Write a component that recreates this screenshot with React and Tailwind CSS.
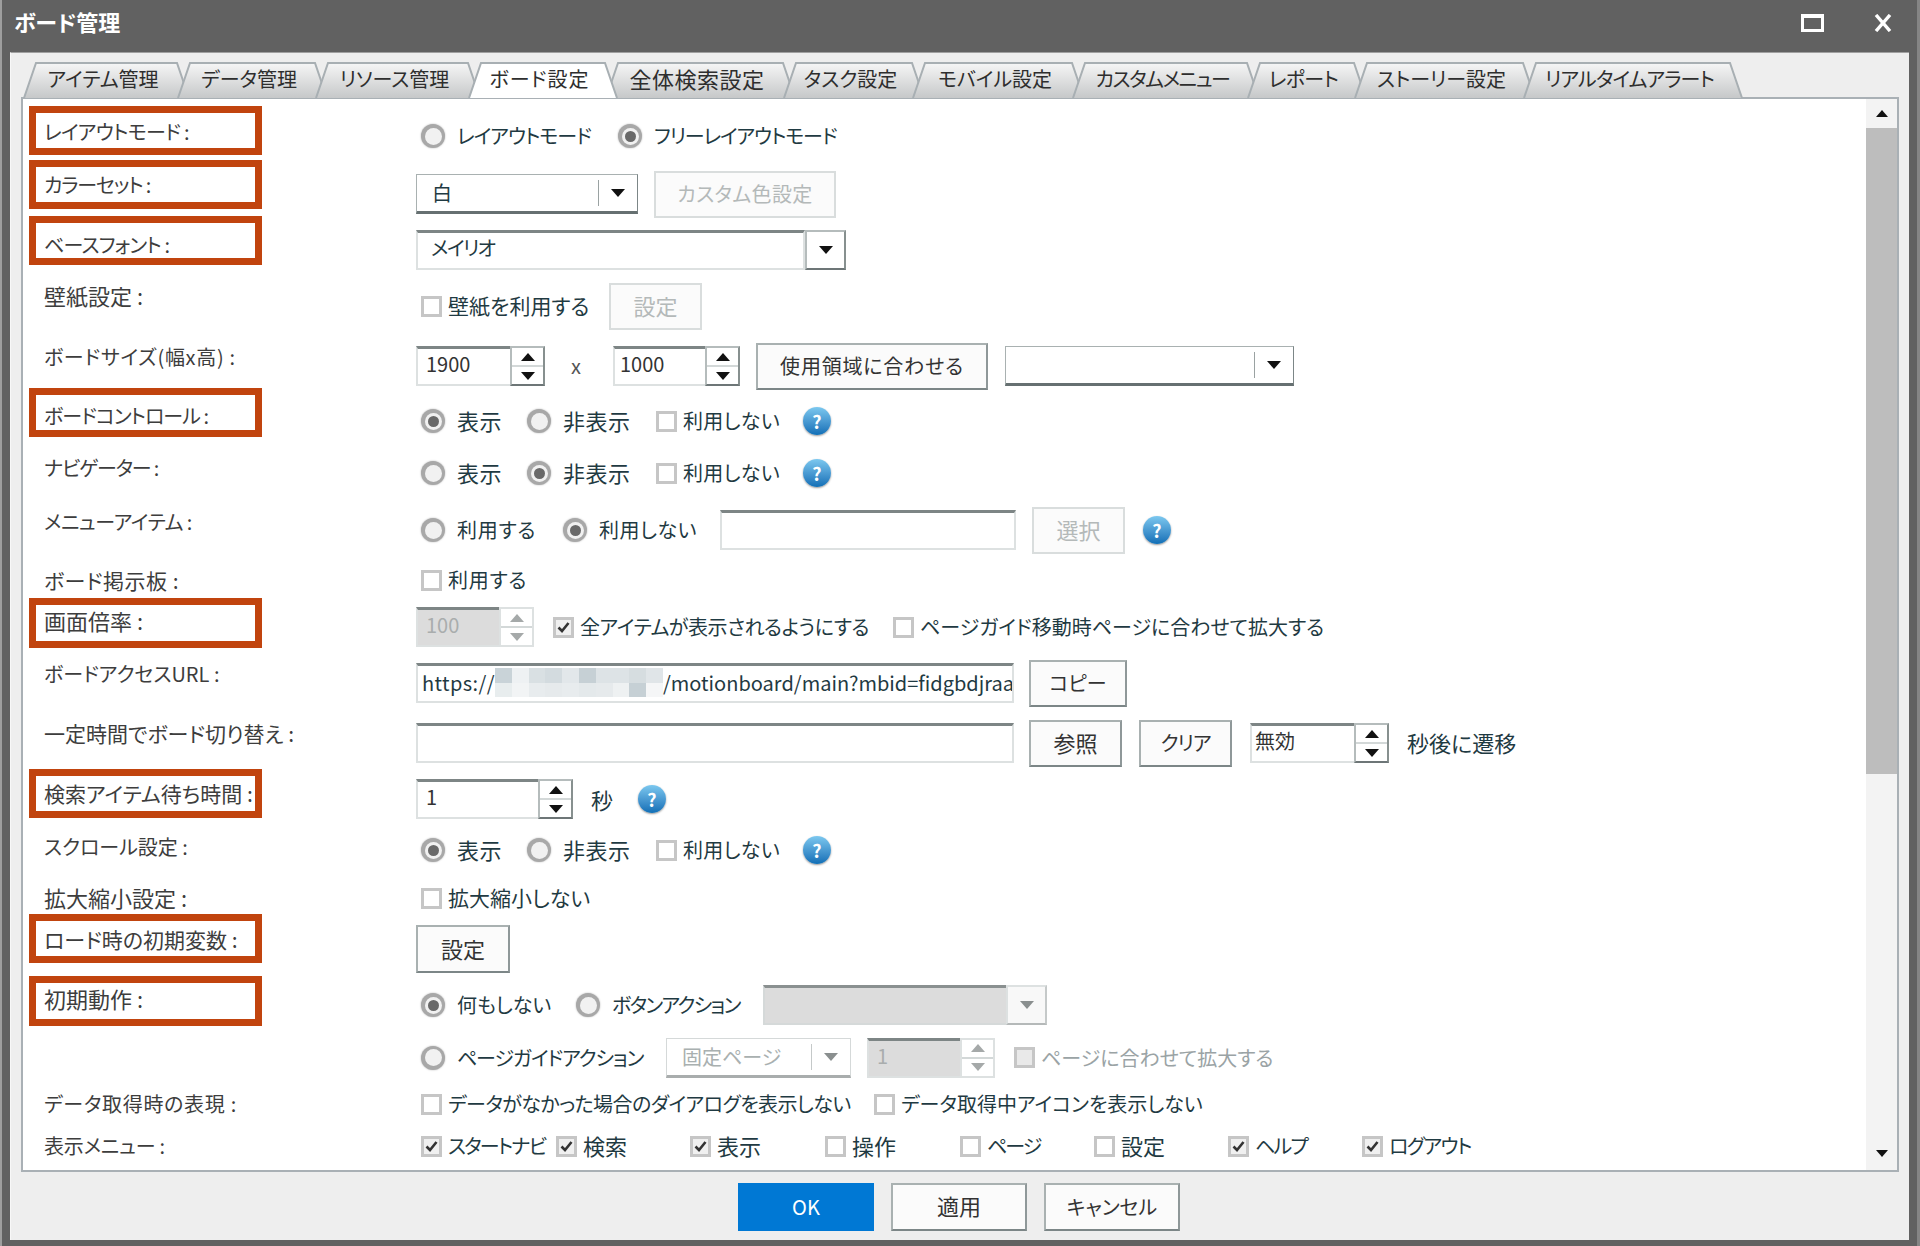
import React from "react";

const Tri = ({ up, color = "#111111", w = 14, h = 8 }) => (
  <svg width={w} height={h} viewBox="0 0 14 8" preserveAspectRatio="none">
    <path d={up ? "M7 0 L14 8 L0 8 Z" : "M0 0 L14 0 L7 8 Z"} fill={color} />
  </svg>
);

const BIG = "text-[22px] -mt-[3px]";
const MID = "text-[21px] -mt-[2px]";

const Radio = ({ on, w, t = "", children }) => (
  <div className={`flex items-center gap-[12px] shrink-0 whitespace-nowrap ${w}`}>
    <div className="w-[24px] h-[24px] rounded-full bg-[#a8a8a8] shadow-[0_0_2px_#b5b5b5] flex items-center justify-center shrink-0">
      <div className="w-[17px] h-[17px] rounded-full bg-[#f1f1f1] flex items-center justify-center">
        {on && <div className="w-[11px] h-[11px] rounded-full bg-[#696969]" />}
      </div>
    </div>
    <span className={t}>{children}</span>
  </div>
);

const Check = ({ on, off, w, t = "", children }) => (
  <div className={`flex items-center gap-[6px] shrink-0 whitespace-nowrap ${w} ${off ? "text-[#9aa3a5]" : ""}`}>
    <div className={`w-[21px] h-[21px] border-[3px] border-[#c6c6c6] flex items-center justify-center shrink-0 ${off ? "bg-[#e9e9e9]" : on ? "bg-[#f0f0f0]" : "bg-white"}`}>
      {on && (
        <svg width="13" height="12" viewBox="0 0 13 12">
          <path d="M1.5 6.5 L5 10 L11.5 2" fill="none" stroke="#333333" strokeWidth="2.6" />
        </svg>
      )}
    </div>
    <span className={t}>{children}</span>
  </div>
);

const Help = ({ cls = "" }) => (
  <div className={`w-[28px] h-[28px] rounded-full bg-linear-to-b from-[#7cc8ef] to-[#0e6fb6] shadow-[0_1px_2px_#999999] text-white font-bold text-[18px] leading-[28px] text-center shrink-0 ${cls}`}>
    ?
  </div>
);

const Btn = ({ w, h = "h-[47px]", dis, cls = "", t = "", children }) => (
  <div
    className={`flex items-center justify-center bg-[#fbfbfb] border-2 shrink-0 whitespace-nowrap ${w} ${h} ${cls} ${
      dis
        ? "border-[#d9dddd] text-[#b4b9b9]"
        : "border-[#a9b1b1] border-b-[#7c8687] border-r-[#8f9899] text-[#333333]"
    }`}
  >
    <span className={t}>{children}</span>
  </div>
);

const Spin = ({ w, val, dis, cls = "", pad = "pl-[8px]" }) => (
  <div className={`flex h-[40px] shrink-0 ${cls}`}>
    <div
      className={`${w} ${pad} border-t-[3px] border-t-[#7d8585] border-l-2 border-b-2 border-[#dde1e1] leading-[30px] text-[#333333] ${
        dis ? "bg-[#dcdcdc] text-[#a9adad]" : "bg-white"
      }`}
    >
      {val}
    </div>
    <div
      className={`w-[35px] flex flex-col border-2 ${
        dis ? "border-[#dde1e1]" : "border-[#b5bcbc] border-b-[#6d7677] border-r-[#87908f]"
      }`}
    >
      <div className="flex-1 flex items-center justify-center border-b-2 border-[#d3d8d8]">
        <Tri up color={dis ? "#a5a9a9" : "#111111"} />
      </div>
      <div className="flex-1 flex items-center justify-center">
        <Tri color={dis ? "#a5a9a9" : "#111111"} />
      </div>
    </div>
  </div>
);

const Drop = ({ w, val, dis, cls = "" }) => (
  <div
    className={`flex items-center h-[40px] shrink-0 border border-b-[3px] bg-white ${w} ${cls} ${
      dis ? "border-[#d5d9d9] border-b-[#a9adad] text-[#a9b0b0] bg-[#f5f5f5]" : "border-[#a9b1b1] border-b-[#667071] border-r-[#7c8687]"
    }`}
  >
    <span className="flex-1 pl-[15px] whitespace-nowrap">{val}</span>
    <div className={`w-[1px] h-[26px] ${dis ? "bg-[#c5c9c9]" : "bg-[#9aa2a2]"}`} />
    <div className="w-[38px] flex justify-center">
      <Tri color={dis ? "#8a8f8f" : "#111111"} />
    </div>
  </div>
);

const Field = ({ w, cls = "", children }) => (
  <div className={`h-[40px] shrink-0 bg-white border-t-[3px] border-t-[#7d8585] border-l-2 border-r-2 border-b-2 border-[#dde1e1] overflow-hidden whitespace-nowrap ${w} ${cls}`}>
    {children}
  </div>
);

const Row = ({ h, label, lift = "", t = "", children }) => (
  <div className={`flex items-center ${h}`}>
    <div className={`w-[393px] pl-[21px] shrink-0 text-[#3d3d3d] whitespace-nowrap ${lift}`}>
      <span className={t}>{label}</span>
    </div>
    <div className="flex items-center">{children}</div>
  </div>
);

const TABS = [
  { t: "アイテム管理", w: 167, c: "w-[167px]" },
  { t: "データ管理", w: 151, c: "w-[151px]" },
  { t: "リソース管理", w: 166, c: "w-[166px]" },
  { t: "ボード設定", w: 150, c: "w-[150px]", s: "tracking-[1px]", on: true },
  { t: "全体検索設定", w: 191, c: "w-[191px]", s: "text-[22px] -mt-[3px] tracking-[0.5px]" },
  { t: "タスク設定", w: 142, c: "w-[142px]" },
  { t: "モバイル設定", w: 173, c: "w-[173px]" },
  { t: "カスタムメニュー", w: 188, c: "w-[188px]", s: "tracking-[-1.4px]" },
  { t: "レポート", w: 120, c: "w-[120px]", s: "tracking-[-0.6px]" },
  { t: "ストーリー設定", w: 182, c: "w-[182px]" },
  { t: "リアルタイムアラート", w: 220, c: "w-[220px]", s: "tracking-[-0.9px]" },
];

const Tab = ({ t, w, c, s = "", on }) => (
  <div className={`relative h-[36px] -ml-[13px] first:ml-0 shrink-0 flex items-center justify-center pr-[7px] text-[#2e2e2e] whitespace-nowrap ${c} ${on ? "z-10" : ""}`}>
    <svg className="absolute inset-0" width={w} height="36" viewBox={`0 0 ${w} 36`}>
      <path
        d={`M1 36 L13 1 L${w - 13} 1 L${w - 1} 36`}
        fill={on ? "#ffffff" : "url(#tabfill)"}
        stroke="#a8afb3"
        strokeWidth="2"
      />
    </svg>
    <span className={`relative pb-[2px] ${s}`}>{t}</span>
  </div>
);

const BOXES = [
  "top-[7px] h-[49px]",
  "top-[61px] h-[49px]",
  "top-[117px] h-[49px]",
  "top-[289px] h-[49px]",
  "top-[499px] h-[50px]",
  "top-[670px] h-[49px]",
  "top-[815px] h-[49px]",
  "top-[877px] h-[50px]",
];

const BLUR = [
  "#c9d3d8", "#eef1f3", "#d9e0e3", "#d3dbdf", "#e2e7ea", "#c6d0d5", "#dde3e6", "#dde3e6", "#d6dde0", "#e0e5e8",
  "#e8edee", "#f2f4f5", "#e8ecee", "#e6eaec", "#e8ecee", "#e4e9eb", "#e6eaec", "#eef1f2", "#c6d0d5", "#f5f6f7",
];

const App = () => {
  return (
    <div className="w-[1920px] h-[1246px] bg-[#616161] border-l-2 border-l-[#9e9e9e] border-r-[3px] border-r-[#858585] flex flex-col overflow-hidden text-[20px] leading-[30px] font-['Noto_Sans_CJK_JP','Liberation_Sans',sans-serif] [font-feature-settings:'palt']">
      {/* title bar */}
      <div className="h-[52px] shrink-0 flex items-center justify-between pl-[12px] pr-[25px]">
        <span className="text-white font-bold text-[22px] pb-[11px]">ボード管理</span>
        <div className="flex items-center gap-[50px] pb-[6px]">
          <div className="w-[23px] h-[18px] border-[3px] border-t-[4px] border-white" />
          <svg width="18" height="18" viewBox="0 0 18 18">
            <path d="M2 1 L16 17 M16 1 L2 17" stroke="white" strokeWidth="3.4" />
          </svg>
        </div>
      </div>

      <div className="ml-[8px] mr-[8px] h-[1188px] bg-[#eeeeee] border-t border-t-[#a0a0a0] border-l border-l-[#f8f8f8] flex flex-col pl-[10px] pr-[10px] pt-[9px]">
        <svg width="0" height="0" className="absolute">
          <defs>
            <linearGradient id="tabfill" x1="0" y1="0" x2="0" y2="1">
              <stop offset="0" stopColor="#f6f6f6" />
              <stop offset="1" stopColor="#c6c8c9" />
            </linearGradient>
          </defs>
        </svg>

        {/* tabs */}
        <div className="flex h-[36px] -mb-[1px] relative z-10 pl-[2px]">
          {TABS.map((tab) => (
            <Tab key={tab.t} {...tab} />
          ))}
        </div>

        {/* panel */}
        <div className="relative h-[1075px] bg-white border-2 border-[#a9b0b5] flex text-[#1f3a42]">
          <div className="flex-1 pt-[9px] overflow-hidden">
            <Row h="h-[56px]" label="レイアウトモード :" lift="pb-[8px]" t="tracking-[-0.7px]">
              <div className="flex ml-[5px]">
                <Radio w="w-[197px]" t="tracking-[-1px]">レイアウトモード</Radio>
                <Radio on t="tracking-[-1.1px]">フリーレイアウトモード</Radio>
              </div>
            </Row>
            <Row h="h-[60px]" label="カラーセット :" lift="pb-[18px]" t="tracking-[-1.2px]">
              <Drop w="w-[222px]" val="白" />
              <Btn w="w-[182px]" dis cls="ml-[16px]" t="tracking-[0.4px]">カスタム色設定</Btn>
            </Row>
            <Row h="h-[52px]" label="ベースフォント :" lift="pb-[10px]" t="tracking-[-0.8px]">
              <Field w="w-[389px]"><span className="pl-[13px] tracking-[-1.6px]">メイリオ</span></Field>
              <div className="w-[41px] h-[40px] flex items-center justify-center border-2 border-[#b5bcbc] border-b-[#6d7677] border-r-[#87908f] bg-white">
                <Tri />
              </div>
            </Row>
            <Row h="h-[60px]" label="壁紙設定 :" lift="pb-[20px]" t="text-[22px]">
              <div className="flex items-center ml-[5px]">
                <Check w="w-[188px]" t={MID}>壁紙を利用する</Check>
                <Btn w="w-[93px]" dis t={BIG}>設定</Btn>
              </div>
            </Row>
            <Row h="h-[60px]" label="ボードサイズ(幅x高) :" lift="pb-[18px]" t="tracking-[0.7px]">
              <Spin w="w-[94px]" val="1900" />
              <span className="w-[68px] pr-[6px] text-center text-[#555555]">x</span>
              <Spin w="w-[92px]" val="1000" pad="pl-[5px]" />
              <Btn w="w-[232px]" cls="ml-[16px]" t="tracking-[0.8px]">使用領域に合わせる</Btn>
              <Drop w="w-[289px]" val="" cls="ml-[17px]" />
            </Row>
            <Row h="h-[50px]" label="ボードコントロール :" lift="pb-[10px]" t="tracking-[-1px]">
              <div className="flex items-center ml-[5px]">
                <Radio on w="w-[106px]" t={`${BIG} tracking-[0.5px]`}>表示</Radio>
                <Radio w="w-[129px]" t={`${BIG} tracking-[0.5px]`}>非表示</Radio>
                <Check w="w-[147px]" t="tracking-[0.3px]">利用しない</Check>
                <Help />
              </div>
            </Row>
            <Row h="h-[54px]" label="ナビゲーター :" lift="pb-[10px]" t="tracking-[-1.2px]">
              <div className="flex items-center ml-[5px]">
                <Radio w="w-[106px]" t={`${BIG} tracking-[0.5px]`}>表示</Radio>
                <Radio on w="w-[129px]" t={`${BIG} tracking-[0.5px]`}>非表示</Radio>
                <Check w="w-[147px]" t="tracking-[0.3px]">利用しない</Check>
                <Help />
              </div>
            </Row>
            <Row h="h-[60px]" label="メニューアイテム :" lift="pb-[16px]" t="tracking-[-0.5px]">
              <div className="flex items-center ml-[5px]">
                <Radio w="w-[142px]" t="tracking-[0.8px]">利用する</Radio>
                <Radio on w="w-[157px]" t="tracking-[0.5px]">利用しない</Radio>
                <Field w="w-[296px]" />
                <Btn w="w-[93px]" dis cls="ml-[16px]" t={BIG}>選択</Btn>
                <Help cls="ml-[18px]" />
              </div>
            </Row>
            <Row h="h-[40px]" label="ボード掲示板 :" t="text-[21px] tracking-[0.5px]">
              <Check w="ml-[5px]" t="tracking-[0.8px]">利用する</Check>
            </Row>
            <Row h="h-[54px]" label="画面倍率 :" lift="pb-[12px]" t="text-[22px]">
              <Spin w="w-[83px]" val="100" dis />
              <Check on w="w-[340px] ml-[19px]" t="tracking-[-0.45px]">全アイテムが表示されるようにする</Check>
              <Check>ページガイド移動時ページに合わせて拡大する</Check>
            </Row>
            <Row h="h-[58px]" label="ボードアクセスURL :" lift="pb-[18px]">
              <Field w="w-[598px]">
                <div className="flex items-center h-full pl-[4px] -mt-[1px]">
                  <span className="tracking-[0.4px]">https://</span>
                  <div className="grid grid-cols-10 w-[168px] h-[29px] shrink-0">
                    {BLUR.map((c, i) => (
                      <div key={i} style={{ backgroundColor: c }} />
                    ))}
                  </div>
                  <span>/motionboard/main?mbid=fidgbdjraav</span>
                </div>
              </Field>
              <Btn w="w-[98px]" cls="ml-[15px]">コピー</Btn>
            </Row>
            <Row h="h-[62px]" label="一定時間でボード切り替え :" lift="pb-[19px]" t="text-[21px]">
              <Field w="w-[598px]" />
              <Btn w="w-[93px]" cls="ml-[15px]" t={BIG}>参照</Btn>
              <Btn w="w-[93px]" cls="ml-[17px]" t="tracking-[-1px]">クリア</Btn>
              <Spin w="w-[104px]" val="無効" cls="ml-[18px]" pad="pl-[3px]" />
              <span className={`ml-[18px] whitespace-nowrap ${BIG}`}>秒後に遷移</span>
            </Row>
            <Row h="h-[50px]" label="検索アイテム待ち時間 :" lift="pb-[12px]" t="text-[21px]">
              <Spin w="w-[122px]" val="1" />
              <span className="ml-[18px] w-[47px] text-[22px]">秒</span>
              <Help />
            </Row>
            <Row h="h-[52px]" label="スクロール設定 :" lift="pb-[6px]">
              <div className="flex items-center ml-[5px]">
                <Radio on w="w-[106px]" t={`${BIG} tracking-[0.5px]`}>表示</Radio>
                <Radio w="w-[129px]" t={`${BIG} tracking-[0.5px]`}>非表示</Radio>
                <Check w="w-[147px]" t="tracking-[0.3px]">利用しない</Check>
                <Help />
              </div>
            </Row>
            <Row h="h-[44px]" label="拡大縮小設定 :" t="text-[22px]">
              <Check w="ml-[5px]" t={MID}>拡大縮小しない</Check>
            </Row>
            <Row h="h-[58px]" label="ロード時の初期変数 :" lift="pb-[20px]" t="text-[21px]">
              <Btn w="w-[94px]" h="h-[48px]" t={BIG}>設定</Btn>
            </Row>
            <Row h="h-[54px]" label="初期動作 :" lift="pb-[12px]" t="text-[22px]">
              <div className="flex items-center ml-[5px]">
                <Radio on w="w-[155px]">何もしない</Radio>
                <Radio w="w-[187px]" t="tracking-[-1.7px]">ボタンアクション</Radio>
              </div>
              <div className="w-[243px] h-[40px] bg-[#dcdcdc] border-t-[3px] border-t-[#8a9090] border-l-2 border-b-2 border-[#d5d9d9]" />
              <div className="w-[41px] h-[40px] flex items-center justify-center bg-[#f8f8f8] border-2 border-[#dde1e1] border-b-[#b5b9b9] border-r-[#c5c9c9]">
                <Tri color="#8a8f8f" />
              </div>
            </Row>
            <Row h="h-[51px]" label="">
              <div className="flex items-center ml-[5px]">
                <Radio w="w-[245px]" t="tracking-[-1.1px]">ページガイドアクション</Radio>
              </div>
              <Drop w="w-[185px]" val="固定ページ" dis />
              <Spin w="w-[93px]" val="1" dis cls="ml-[16px]" />
              <Check off w="ml-[19px]">ページに合わせて拡大する</Check>
            </Row>
            <Row h="h-[42px]" label="データ取得時の表現 :" t="tracking-[0.7px]">
              <div className="flex items-center ml-[5px]">
                <Check w="w-[453px]" t="tracking-[-0.55px]">データがなかった場合のダイアログを表示しない</Check>
                <Check>データ取得中アイコンを表示しない</Check>
              </div>
            </Row>
            <Row h="h-[42px]" label="表示メニュー :" t="tracking-[-0.2px]">
              <div className="flex items-center ml-[5px]">
                <Check on w="w-[135px]" t="tracking-[-1.8px]">スタートナビ</Check>
                <Check on w="w-[134px]" t={BIG}>検索</Check>
                <Check on w="w-[135px]" t={BIG}>表示</Check>
                <Check w="w-[135px]" t={BIG}>操作</Check>
                <Check w="w-[134px]" t="tracking-[-2px]">ページ</Check>
                <Check w="w-[134px]" t={BIG}>設定</Check>
                <Check on w="w-[134px]" t="tracking-[-1.8px]">ヘルプ</Check>
                <Check on t="tracking-[-1.6px]">ログアウト</Check>
              </div>
            </Row>
          </div>

          {/* scrollbar */}
          <div className="w-[31px] shrink-0 flex flex-col bg-[#f3f3f3]">
            <div className="h-[29px] flex items-center justify-center">
              <Tri up w={12} h={7} />
            </div>
            <div className="h-[646px] bg-[#bdbdbd]" />
            <div className="flex-1 flex items-end justify-center pb-[13px]">
              <Tri w={12} h={7} />
            </div>
          </div>

          {/* highlight boxes */}
          {BOXES.map((b) => (
            <div key={b} className={`absolute left-[6px] w-[233px] border-[7px] border-[#c1440e] ${b}`} />
          ))}
        </div>

        {/* footer */}
        <div className="flex-1 flex items-center justify-center gap-[17px] pt-[1px] pr-[2px] text-[#333333]">
          <div className="w-[136px] h-[48px] flex items-center justify-center bg-[#0078d4] text-white">OK</div>
          <Btn w="w-[136px]" h="h-[48px]" t={BIG}>適用</Btn>
          <Btn w="w-[136px]" h="h-[48px]">キャンセル</Btn>
        </div>
      </div>
    </div>
  );
};

export default App;
